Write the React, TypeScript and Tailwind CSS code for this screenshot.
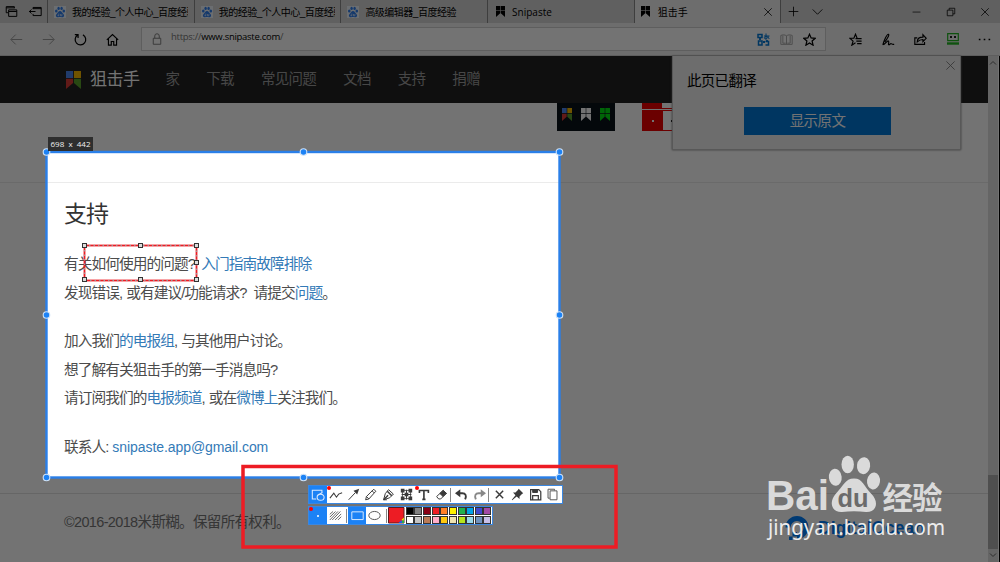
import type { ReactNode } from "react";
import clsx from "clsx";

interface IconProps {
  children: ReactNode;
  size?: number;
  className?: string;
}

// Base for the line icons, drawn on a 16x16 grid
function Icon({ children, size = 14, className }: IconProps) {
  return (
    <svg
      width={size}
      height={size}
      viewBox="0 0 16 16"
      fill="none"
      stroke="currentColor"
      strokeWidth="1.2"
      className={clsx("shrink-0", className)}
    >
      {children}
    </svg>
  );
}

function Paw() {
  return (
    <svg width="12" height="12" viewBox="0 0 12 12" className="shrink-0 bg-[#eef3fb]">
      <g fill="#2f7fee">
        <ellipse cx="2.3" cy="5" rx="1.3" ry="1.6" />
        <ellipse cx="4.6" cy="2.4" rx="1.2" ry="1.6" />
        <ellipse cx="7.6" cy="2.4" rx="1.2" ry="1.6" />
        <ellipse cx="9.8" cy="5" rx="1.3" ry="1.6" />
        <path d="M6 5C7.6 5 8.4 7 9.6 8.2 10.8 9.6 9.8 11.6 8 11.3 6.6 11 5.4 11 4 11.3 2.2 11.6 1.2 9.6 2.4 8.2 3.6 7 4.4 5 6 5Z" />
      </g>
      <path d="M4.8 7.6v2.2H3.9v-1M6.5 8v1.8h1.4V8" stroke="#fff" strokeWidth=".6" fill="none" />
    </svg>
  );
}

interface FlagProps {
  colors: [string, string, string, string];
  width: number;
  height: number;
}

function Flag({ colors, width, height }: FlagProps) {
  return (
    <svg width={width} height={height} viewBox="0 0 14 18" preserveAspectRatio="none" className="shrink-0">
      <path d="M0 0h6.600v7H0z" fill={colors[0]} />
      <path d="M7.400 0H14v7H7.400z" fill={colors[1]} />
      <path d="M0 7.800h6.600V12L0 18z" fill={colors[2]} />
      <path d="M7.400 7.800H14V18l-6.600-6z" fill={colors[3]} />
    </svg>
  );
}

const black: FlagProps["colors"] = ["#000", "#000", "#000", "#000"];
const white: FlagProps["colors"] = ["#fff", "#fff", "#fff", "#fff"];
const green: FlagProps["colors"] = ["#00e010", "#00e010", "#00e010", "#00e010"];
const multi: FlagProps["colors"] = ["#4a86f0", "#f5b800", "#d83a35", "#5aa02c"];

const tabs = [
  { title: "我的经验_个人中心_百度经验", baidu: true },
  { title: "我的经验_个人中心_百度经验", baidu: true },
  { title: "高级编辑器_百度经验", baidu: true },
  { title: "Snipaste", baidu: false },
];

function TabBar() {
  return (
    <div className="flex h-[23px] bg-[#d6d6d6] text-[10px] text-black">
      <div className="flex w-[47px] items-center gap-[11px] pl-[5px]">
        <Icon size={13}>
          <path d="M4 9.500H1.500V2h10v2M1.500 3.500h10M4.500 6h10v8h-10zM4.500 8h10" />
        </Icon>
        <Icon size={13}>
          <path d="M5 5V3h10v10H5v-2M5 4.500h10M0 8h8M3 5.500 0.500 8 3 10.500" />
        </Icon>
      </div>
      {tabs.map((tab, i) => (
        <div key={i} className="flex w-[146.700px] items-center border-l border-[#8a8a8a] pl-[6px]">
          {tab.baidu ? (
            <Paw />
          ) : (
            <div className="flex w-3 justify-center">
              <Flag colors={black} width={9} height={11} />
            </div>
          )}
          <span
            className={clsx(
              "ml-[6px] w-[116px] overflow-hidden pt-px whitespace-nowrap",
              tab.baidu
                ? "tracking-[-0.500px]"
                : "font-['Open_Sans',sans-serif]"
            )}
          >
            {tab.title}
          </span>
        </div>
      ))}
      <div className="flex w-[146.200px] items-center border-l border-[#8a8a8a] bg-[#f2f2f2] pr-[7px] pl-[6px]">
        <Flag colors={black} width={9} height={11} />
        <span className="ml-2 grow pt-px">狙击手</span>
        <Icon size={10}>
          <path d="M2 2l12 12M14 2 2 14" />
        </Icon>
      </div>
      <div className="flex grow items-center border-l border-[#8a8a8a] pr-[10px] pl-[7px]">
        <Icon size={11}>
          <path d="M8 1v14M1 8h14" />
        </Icon>
        <Icon size={11} className="ml-[13px]">
          <path d="M1 5l7 7 7-7" />
        </Icon>
        <div className="grow" />
        <Icon size={9}>
          <path d="M1 9h14" />
        </Icon>
        <Icon size={10} className="ml-[25px]">
          <path d="M2 5h9v9H2zM5 5V2h9v9h-3" />
        </Icon>
        <Icon size={10} className="ml-6">
          <path d="M2 2l12 12M14 2 2 14" />
        </Icon>
      </div>
    </div>
  );
}

function AddressBar() {
  return (
    <div className="flex h-[33px] items-center border-b border-[#d0d0d0] bg-[#f2f2f2] text-black">
      <div className="flex w-[141px] items-center gap-[19px] pl-[10px]">
        <Icon size={13} className="text-[#999]">
          <path d="M15 8H1.500M7 2 1 8l6 6" />
        </Icon>
        <Icon size={13} className="text-[#999]">
          <path d="M1 8h13.500M9 2l6 6-6 6" />
        </Icon>
        <Icon size={13}>
          <path d="M11 2.300A6.500 6.500 0 1 1 4.500 2.500M1 2h4v4" strokeWidth="1.500" />
        </Icon>
        <Icon size={13}>
          <path d="M1 8.500 8 2l7 6.500M3 7v8h3.500v-4.500h3V15H13V7" strokeWidth="1.400" />
        </Icon>
      </div>
      <div className="flex h-6 w-[685px] items-center border border-[#d0d0d0] bg-white pr-[9px] pl-[9px]">
        <Icon size={12} className="text-[#777]">
          <path d="M3 7h10v8H3zM5 7V4a3 3 0 0 1 6 0v3" />
        </Icon>
        <span className="ml-[8px] grow pb-[3px] font-['Open_Sans',sans-serif] text-[9.500px] tracking-[-0.280px] text-[#777]">
          https://<span className="text-black">www.snipaste.com</span>/
        </span>
        <svg width="13" height="13" viewBox="0 0 13 13" className="mr-[10px] text-[#0078d7]" fill="none" stroke="currentColor">
          <path d="M1 1.500h4v3H1zM1.500 8v4h3.500V8zM8.500 8.500h3v3.500h-3" strokeWidth="1.500" />
          <path d="M7 3h5.500M9 .500v6M11.500 3.500c-1.500 3.500-5 2.500-4 .8s4.500-.500 4.500 1.700" />
          <path d="M3 4v3M6 9h2M10 7v2" strokeWidth="1.800" />
        </svg>
        <Icon size={13} className="mr-[10px] text-[#aaa]">
          <path d="M8 3.500v10M8 3.500C6 2 3.500 2 1 3v11h14V3C12.500 2 10 2 8 3.500zM3.500 3v9.500H7M12.500 3v9.500H9" />
        </Icon>
        <Icon size={13}>
          <path d="m8 1.500 2 4.500 5 .5-3.800 3.300L12.400 15 8 12.300 3.600 15l1.200-5.200L1 6.500 6 6z" strokeWidth="1.500" />
        </Icon>
      </div>
      <div className="flex grow items-center justify-between pr-[9px] pl-[23px]">
        <Icon size={13}>
          <path d="M8 12 3.500 15 5 10 1 6.500h5L8 1.500 10 6.500M8 7h7.500M9 10h6.500M10 13h5.500" strokeWidth="1.400" />
        </Icon>
        <Icon size={13}>
          <path d="M1 14.500C2.500 9 6 1 8 1.500 9.500 2 6 8 3.500 11M1 14.500c3 0 5.500-6 7-4.500 1.200 1.300-1 4.500.5 4.500 1.300 0 1.500-1.500 2.500-1.500s1 1.500 4 1" strokeWidth="1.400" />
        </Icon>
        <Icon size={13}>
          <path d="M4 6H1v8h12v-3M4 11c0-4 3-6 7-6V2l4 4.500-4 4V8C8 8 6 9 4 11z" strokeWidth="1.400" />
        </Icon>
        <svg width="12" height="12" viewBox="0 0 12 12" fill="none">
          <path d="M.7.700h10.600v7H.7z" stroke="#22b522" strokeWidth="1.200" />
          <path d="M0 10.500h12" stroke="#22b522" strokeWidth="2.400" />
          <path d="M3 4h2M7 4h2" stroke="#222" strokeWidth="2" />
        </svg>
        <Icon size={13}>
          <path d="M1 8h2M7 8h2M13 8h2" strokeWidth="2" />
        </Icon>
      </div>
    </div>
  );
}

const links = ["家", "下载", "常见问题", "文档", "支持", "捐赠"];

function SiteNav() {
  return (
    <nav className="flex h-[47px] items-center bg-[#222] pl-[66px]">
      <Flag colors={multi} width={15} height={18} />
      <span className="ml-[9px] text-[17px] tracking-[-0.500px] text-white">狙击手</span>
      <div className="ml-[26px] flex gap-[27px] text-[14.500px] tracking-[-0.700px] text-[#9d9d9d]">
        {links.map((link) => (
          <span key={link}>{link}</span>
        ))}
      </div>
    </nav>
  );
}

function TranslatePopup() {
  return (
    <div className="absolute top-[56px] left-[672px] h-[94px] w-[289px] border border-t-0 border-[#c4c4c4] bg-[#f2f2f2] shadow-[0_0_2px_#777]">
      <div className="flex justify-between pr-[4px] pl-[14px] text-black">
        <span className="pt-[14px] text-[14.500px] leading-[22px] tracking-[-0.700px]">此页已翻译</span>
        <Icon size={11} className="mt-[4px] text-[#777]">
          <path d="M2 2l12 12M14 2 2 14" />
        </Icon>
      </div>
      <div className="mt-[15px] ml-[71px] flex h-[28px] w-[147px] items-center justify-center bg-[#0078d7] pt-[2px] text-[14.500px] tracking-[-0.600px] text-white">
        显示原文
      </div>
    </div>
  );
}

function Link({ children }: { children: ReactNode }) {
  return <span className="text-[#337ab7]">{children}</span>;
}

function Content() {
  return (
    <main className="flex grow flex-col bg-white">
      <div className="flex h-[80px] items-start border-b border-[#ebebeb]">
        <div className="ml-[557px] flex h-[28px] w-[58px] justify-between bg-[#0b121a] px-[5px] pt-[5px]">
          <Flag colors={multi} width={10} height={13} />
          <Flag colors={white} width={10} height={13} />
          <Flag colors={green} width={10} height={13} />
        </div>
        <div className="ml-[27px] w-[60px]">
          <div className="h-[6px] border-b border-[#e00]">
            <div className="h-[5px] w-5 bg-[#e00]" />
          </div>
          <div className="mt-[1px] flex h-[21px] border border-[#e00]">
            <div className="flex w-5 items-center justify-center bg-[#e00]">
              <div className="h-[2px] w-[2px] bg-white" />
            </div>
            <div className="mt-[9px] ml-[8px] h-[2px] w-[2px] bg-black" />
          </div>
        </div>
      </div>
      <div className="h-[311px] border-b border-[#e2e2e2] pl-[64px] text-[14.700px] leading-[28.700px] tracking-[-0.950px] whitespace-pre text-[#4c4c4c]">
        <h2 className="pt-[16px] text-[23px] leading-[30px] text-[#333]">支持</h2>
        <p className="pt-[21px]">
          有关如何使用的问题?
          <span className="ml-[6.500px]">
            <Link>入门指南故障排除</Link>
          </span>
          <br />
          发现错误, <span className="ml-px">或有建议/功能请求?</span>
          <span className="ml-[7px]">
            请提交<Link>问题</Link>。
          </span>
        </p>
        <p className="pt-[19.500px]">
          加入我们<Link>的电报组</Link>, <span className="ml-px">与其他用户讨论。</span>
          <br />
          想了解有关狙击手的第一手消息吗?
          <br />
          请订阅我们的<Link>电报频道</Link>, <span className="ml-px">或在</span>
          <Link>微博上</Link>关注我们。
        </p>
        <p className="pt-[19.500px]">
          联系人:
          <span className="ml-[4px] text-[14px] tracking-[-0.070px] text-[#337ab7]">snipaste.app@gmail.com</span>
        </p>
      </div>
      <footer className="flex grow items-center justify-between pr-[63px] pb-[10px] pl-[64px]">
        <span className="text-[14.500px] tracking-[-0.650px] text-[#777]">©2016-2018米斯糊。保留所有权利。</span>
        <div className="flex items-center gap-[9px] pt-[10px] text-[#0080ff]">
          <svg width="24" height="24" viewBox="0 0 24 24" fill="none">
            <path d="M12 20.500a9 9 0 1 0-9-9" stroke="currentColor" strokeWidth="5" />
            <path d="M7.500 16h4.500v4.500H7.500zM4 20.500h3.500V24H4z" fill="currentColor" />
          </svg>
          <span className="text-[17.500px] leading-6 font-bold">DigitalOcean</span>
        </div>
      </footer>
    </main>
  );
}

function Scrollbar() {
  return (
    <div className="flex w-[10px] flex-col items-center bg-[#e0e0e0] text-[#666]">
      <Icon size={8} className="mt-[3px]">
        <path d="M2 11l6-6 6 6" strokeWidth="2" />
      </Icon>
      <div className="grow" />
      <div className="h-[74px] w-full bg-[#b0b0b0]" />
      <Icon size={8} className="mt-[2px] mb-[3px]">
        <path d="M2 5l6 6 6-6" strokeWidth="2" />
      </Icon>
    </div>
  );
}

const handles = [
  [0, 0], [257, 0], [513, 0],
  [0, 163], [513, 163],
  [0, 325.5], [257, 325.5], [513, 325.5],
];

function Selection() {
  return (
    <>
      {/* Everything outside the box is darkened by its shadow */}
      <div className="absolute top-[152px] left-[46px] h-[325px] w-[514px] shadow-[0_0_0_1100px_rgba(0,0,0,0.550)]" />
      <svg className="absolute top-[147px] left-[41px]" width="524" height="336">
        <rect x="5.500" y="5" width="513" height="325.500" fill="none" stroke="#2a7fe8" strokeWidth="2.400" />
        {handles.map(([x, y]) => (
          <circle key={`${x}-${y}`} cx={x + 5.5} cy={y + 5} r="3.300" fill="#1c82f5" stroke="#cfe2f7" strokeWidth="1.100" />
        ))}
      </svg>
      <div className="absolute top-[137px] left-[48px] flex h-[14px] w-[45px] items-center justify-center bg-[#2e2e2e] font-['Open_Sans',sans-serif] text-[8px] whitespace-pre text-[#eee]">
        698  x  442
      </div>
    </>
  );
}

const marks = [
  [3, 3], [59, 3], [115, 3],
  [115, 20],
  [3, 37], [59, 37], [115, 37],
];

function DrawnRect() {
  return (
    <svg className="absolute top-[242px] left-[81px]" width="120" height="42">
      <rect x="3.500" y="3.500" width="112" height="35" fill="none" stroke="#ed1c24" strokeWidth="1.800" />
      <rect x="3.500" y="3.500" width="112" height="35" fill="none" stroke="#8f9a9c" strokeWidth="1" strokeDasharray="1.500 3" />
      {marks.map(([x, y]) => (
        <rect key={`${x}-${y}`} x={x - 1.5} y={y - 1.5} width="4" height="4" fill="#ddd" stroke="#333" strokeWidth="1" />
      ))}
    </svg>
  );
}

function Cell({ children, active }: { children: ReactNode; active?: boolean }) {
  return (
    <div
      className={clsx(
        "relative flex h-full w-[17.700px] shrink-0 items-center justify-center",
        active ? "bg-[#1c82f5] text-[#dcebff]" : "text-[#3a3a3a]"
      )}
    >
      {children}
    </div>
  );
}

function RedDot() {
  return <span className="absolute top-0 left-0 h-1 w-1 rounded-full bg-[#f00]" />;
}

function Separator() {
  return <div className="mx-[-0.500px] h-[14px] w-px shrink-0 bg-[#888]" />;
}

const palette = [
  "#000000", "#7f7f7f", "#880015", "#ed1c24", "#ff7f27", "#fff200", "#22b14c", "#00a2e8", "#3f48cc", "#a349a4",
  "#ffffff", "#c3c3c3", "#b97a57", "#ffaec9", "#ffc90e", "#efe4b0", "#b5e61d", "#99d9ea", "#7092be", "#c8bfe7",
];

function SnipToolbar() {
  return (
    <div className="absolute top-[485px] left-[308px] flex flex-col items-start gap-[2px]">
      <div className="flex h-[19px] w-[255px] items-center border border-[#3b87e0] bg-white">
        <Cell active>
          <Icon>
            <path d="M6 12.500H1.500v-10h11V5" />
            <path d="M7 10.500a4 3.500 0 1 0 8 0 4 3.500 0 1 0-8 0M13 5l-5 3" />
          </Icon>
        </Cell>
        <Cell>
          <RedDot />
          <Icon>
            <path d="M1 11.500 5.500 6l3 4.500L11 7l4-1.500" />
          </Icon>
        </Cell>
        <Cell>
          <Icon size={13}>
            <path d="M2 14.500 10 6" />
            <path d="M15 1 12.500 8 8 3.500z" fill="currentColor" stroke="none" />
          </Icon>
        </Cell>
        <Cell>
          <Icon size={13}>
            <path d="M2 14.500l1-4L12 1.500l2.500 2.500L6 13.500zM10 3.500l2.500 2.500M3 10.500l3 3" />
          </Icon>
        </Cell>
        <Cell>
          <Icon size={13}>
            <path d="M2 14.500 4 7l4-5 6 5.500-4.500 4.500zM2 14.500h4" />
            <path d="M6.500 4 12 9.500M2 14.500 7.500 9" strokeWidth="1.800" />
          </Icon>
        </Cell>
        <Cell>
          <Icon size={13}>
            <path d="M3 3h10v10H3z" strokeWidth="1" />
            <path d="M1 1h4.500v4.500H1zM10.500 1H15v4.500h-4.500zM5.800 5.800h4.400v4.400H5.800zM1 10.500h4.500V15H1zM10.500 10.500H15V15h-4.500z" fill="currentColor" stroke="none" />
            <path d="M8 2v12M2 8h12" strokeWidth="1.300" />
          </Icon>
        </Cell>
        <Cell>
          <RedDot />
          <Icon size={13}>
            <path d="M3 6V3h11v3M8.500 3v11.500M6.500 14h4" strokeWidth="2" />
          </Icon>
        </Cell>
        <Cell>
          <Icon size={13}>
            <path d="M2 10.500 10 3l4 3.500L7 13.500H4.500z" />
            <path d="M6 6.800 10 3l4 3.500-4 4z" fill="currentColor" />
          </Icon>
        </Cell>
        <Separator />
        <Cell>
          <Icon size={13} className="ml-[4px]">
            <path d="M5 6.500h4c4 0 5.500 3 3.500 7.500" strokeWidth="2.300" />
            <path d="M0 6.500 6.500 1.500v10z" fill="currentColor" stroke="none" />
          </Icon>
        </Cell>
        <Cell>
          <Icon size={13} className="ml-[4px] text-[#888]">
            <path d="M11 6.500H7c-4 0-5.500 3-3.500 7.500" strokeWidth="2.300" />
            <path d="M16 6.500 9.500 1.500v10z" fill="currentColor" stroke="none" />
          </Icon>
        </Cell>
        <div className="w-[3px] shrink-0" />
        <Separator />
        <div className="w-[2px] shrink-0" />
        <Cell>
          <Icon size={13}>
            <path d="m3.500 3.500 9 9M12.500 3.500l-9 9" strokeWidth="1.800" />
          </Icon>
        </Cell>
        <Cell>
          <Icon size={13}>
            <path d="M9.500 1 15 6.500 13.500 7.500 10.500 10.500v3L7 10.500 1.500 15 1 14.500 5.500 9 2.500 5.500h3L8.500 2.500z" fill="currentColor" stroke="none" />
          </Icon>
        </Cell>
        <Cell>
          <Icon size={13}>
            <path d="M2 2h10l2.500 2.500V14.500H2zM4.500 14V9.500h7V14" strokeWidth="1.500" />
            <path d="M4.500 2h6v3.500h-6z" fill="currentColor" />
          </Icon>
        </Cell>
        <Cell>
          <Icon size={13} className="text-[#555]">
            <path d="M5 3.500h8.500v11H5zM4.500 12.500H2.500v-11h8V3" />
          </Icon>
        </Cell>
      </div>
      <div className="flex h-[19px] w-[185px] items-center border border-[#3b87e0] bg-white">
        <Cell active>
          <RedDot />
          <span className="h-[2px] w-[2px] rounded-full bg-white" />
        </Cell>
        <Cell>
          <Icon size={13} className="text-[#555]">
            <path d="M1 6.500 5 3M1 10l7-7M1 13.500 11 3M4 13.500 14 3M7.500 13.500 15 6M11 13.500l4-4" strokeWidth="1.100" />
          </Icon>
        </Cell>
        <div className="w-[2px]" />
        <Separator />
        <div className="w-[2px]" />
        <Cell active>
          <Icon size={13}>
            <path d="M1 3.500h14v9.500H1z" />
          </Icon>
        </Cell>
        <Cell>
          <Icon size={13} className="text-[#555]">
            <ellipse cx="8" cy="8" rx="7" ry="5" />
          </Icon>
        </Cell>
        <div className="w-[3px] shrink-0" />
        <Separator />
        <svg width="17" height="17" viewBox="0 0 17 17" className="mx-[1px] shrink-0">
          <path d="M.5.500h15.500V16H.5z" fill="#ed1c24" stroke="#5b1a1c" />
          <path d="M16 10.500V16h-3z" fill="#22b14c" />
          <path d="M10.500 16 13.500 13 14 16z" fill="#1c5cf5" />
          <path d="m13.500 13 2.500-2.500-.5 3z" fill="#fff200" />
        </svg>
        <div className="grid h-[18px] grow grid-cols-10 content-center gap-y-px">
          {palette.map((color) => (
            <span key={color} className="h-[8px] w-[8px] border border-[#333]" style={{ backgroundColor: color }} />
          ))}
        </div>
      </div>
    </div>
  );
}

function Watermark() {
  return (
    <svg className="absolute top-[450px] left-[760px]" width="195" height="100" fill="#dadada">
      <ellipse cx="75.300" cy="27.300" rx="6.400" ry="8.500" transform="rotate(-6 75.300 27.300)" />
      <ellipse cx="87.700" cy="14.500" rx="6.200" ry="8.700" />
      <ellipse cx="103.600" cy="15.700" rx="6.600" ry="8.500" transform="rotate(8 103.600 15.700)" />
      <ellipse cx="113.500" cy="31" rx="6.500" ry="8.500" transform="rotate(8 113.500 31)" />
      <path d="M94 28.500c9 0 10 8 17 15 9 9 5 19-5 18.500-8-1-16-1-24 0-10 .5-14-9.500-6-18.500 7-7 9-15 18-15z" />
      <text x="6" y="60" fontFamily="Liberation Sans" fontWeight="700" fontSize="42" textLength="63" lengthAdjust="spacingAndGlyphs">
        Bai
      </text>
      <text x="77.500" y="57" fontFamily="Liberation Sans" fontWeight="700" fontSize="26" fill="#6b6b6b" textLength="31" lengthAdjust="spacingAndGlyphs">
        du
      </text>
      <text x="122.500" y="58.500" fontFamily="Noto Sans CJK SC" fontWeight="700" fontSize="30.500" textLength="60">
        经验
      </text>
      <text x="8" y="85" fontFamily="Noto Sans" fontSize="22" fill="#ececec" textLength="177" lengthAdjust="spacingAndGlyphs">
        jingyan.baidu.com
      </text>
    </svg>
  );
}

export default function App() {
  return (
    <div className="relative flex h-[562px] w-[1000px] flex-col overflow-hidden bg-white font-['Liberation_Sans','Noto_Sans_CJK_SC',sans-serif]">
      <TabBar />
      <AddressBar />
      <div className="flex grow border-r border-black">
        <div className="flex w-[988px] flex-col">
          <SiteNav />
          <Content />
        </div>
        <Scrollbar />
      </div>
      <TranslatePopup />
      <Selection />
      <DrawnRect />
      <SnipToolbar />
      <svg className="absolute top-[464px] left-[240px]" width="379" height="86">
        <rect x="3" y="2.500" width="373" height="80.500" fill="none" stroke="#ed1c24" strokeWidth="3.500" />
      </svg>
      <Watermark />
    </div>
  );
}
